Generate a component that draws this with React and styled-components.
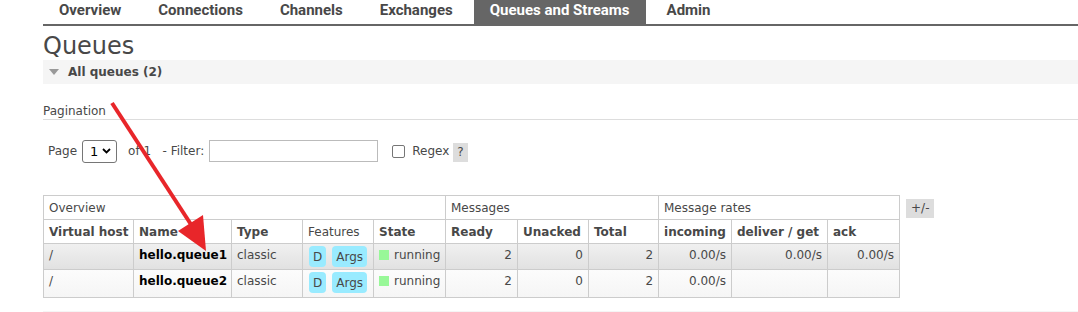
import React from "react";
import styled, { createGlobalStyle } from "styled-components";

const Global = createGlobalStyle`
  body {
    margin: 0;
    background: #fff;
    font-family: "DejaVu Sans", Verdana, sans-serif;
    font-size: 12px;
    color: #484848;
  }
`

const Page = styled.div`
  position: relative;
  width: 1078px;
  height: 312px;
  overflow: hidden;
  padding-left: 43px;
  box-sizing: border-box;
`
const Nav = styled.ul`
  display: flex;
  margin: 0;
  padding: 0;
  list-style: none;
  height: 24px;
  border-bottom: 2px solid #666;
`
const Tab = styled.li`
  padding: 0 16px;
  margin-right: ${p => p.$gap || 0}px;
  line-height: 21px;
  height: 24px;
  font-family: Roboto, "Liberation Sans", sans-serif;
  font-weight: bold;
  font-size: 15px;
  color: ${p => (p.$active ? "#fff" : "#484848")};
  background: ${p => (p.$active ? "#666" : "transparent")};
`
const Title = styled.h1`
  margin: 6px 0 0 0;
  font-size: 24px;
  font-weight: normal;
  line-height: 28px;
  height: 28px;
`
const SectionBar = styled.div`
  display: flex;
  align-items: center;
  height: 24px;
  margin-top: ${p => p.$top || 0}px;
  background: #f5f5f5;
  font-weight: bold;
  font-size: 12px;
`
const Triangle = styled.span`
  width: 0;
  height: 0;
  margin: 0 9px 0 6px;
  border-left: 5px solid transparent;
  border-right: 5px solid transparent;
  border-top: 6px solid #999;
`
const SubHead = styled.div`
  margin-top: 17px;
  height: 18px;
  line-height: 20px;
  border-bottom: 1px solid #ddd;
  font-size: 12px;
`
const Filters = styled.div`
  display: flex;
  align-items: center;
  height: 24px;
  margin-top: 19px;
  padding-left: 5px;
`
const Select = styled.div`
  display: flex;
  align-items: center;
  justify-content: space-between;
  box-sizing: border-box;
  width: 35px;
  height: 23px;
  margin: 0 11px 0 5px;
  padding: 0 5px 0 7px;
  border: 1px solid #767676;
  border-radius: 3px;
  font-size: 13px;
  color: #000;
`
const Chevron = styled.svg`
  width: 9px;
  height: 6px;
`
const TextInput = styled.div`
  box-sizing: border-box;
  width: 169px;
  height: 22px;
  margin: 0 14px 0 5px;
  border: 1px solid #bbb;
`
const Check = styled.div`
  box-sizing: border-box;
  width: 13px;
  height: 13px;
  border: 1px solid #767676;
  border-radius: 2px;
  margin-right: 7px;
`
const Help = styled.span`
  display: inline-block;
  margin-left: 4px;
  padding: 0 4px;
  height: 19px;
  line-height: 19px;
  margin-top: 2px;
  background: #ddd;
`
const TableRow = styled.div`
  display: flex;
  align-items: flex-start;
  margin-top: 32px;
`
const Table = styled.table`
  border-collapse: collapse;
  table-layout: fixed;
  width: 856px;
  border: 1px solid #ccc;
  font-size: 12px;
  td, th {
    border: 1px solid #ccc;
    padding: 0 5px;
    text-align: left;
    white-space: nowrap;
    overflow: hidden;
  }
  th {
    height: 24px;
    box-sizing: border-box;
  }
`
const ColW = styled.col`
  width: ${p => p.$w}px;
`
const Group = styled.th`
  font-weight: normal;
`
const Col = styled.th`
  font-weight: ${p => (p.$normal ? "normal" : "bold")};
`
const Row = styled.tr`
  background: ${p =>
    p.$alt
      ? "linear-gradient(#fcfcfc, #f5f5f5)"
      : "linear-gradient(#f0f0f0, #e1e1e1)"};
  td {
    height: ${p => (p.$alt ? 28 : 26)}px;
    vertical-align: top;
    padding-top: 4px;
    box-sizing: border-box;
  }
`
const Num = styled.td`
  && { text-align: right; }
`
const Name = styled.td`
  font-weight: bold;
  color: #000;
`
const Features = styled.td`
  && { padding: 2px 0 0 6px; }
`
const Pill = styled.span`
  display: inline-block;
  margin-right: 6px;
  padding: 0 4px;
  height: 21px;
  line-height: 22px;
  border-radius: 4px;
  background: #99ebff;
`
const StateBox = styled.span`
  display: inline-block;
  width: 10px;
  height: 10px;
  margin-right: 5px;
  background: #98f898;
  vertical-align: -1px;
`
const Toggle = styled.span`
  margin-left: 6px;
  margin-top: 4px;
  padding: 0 5px;
  height: 19px;
  line-height: 19px;
  background: #ddd;
`
const Arrow = styled.svg`
  position: absolute;
  left: 0;
  top: 0;
  pointer-events: none;
`

const widths = [90, 98, 71, 71, 72, 72, 71, 70, 73, 96, 72]

const rows = [
  { name: "hello.queue1", rates: ["0.00/s", "0.00/s", "0.00/s"] },
  { name: "hello.queue2", rates: ["0.00/s", "", ""] },
]

export default function App() {
  return (
    <Page>
      <Global />
      <Nav>
        <Tab $gap={5}>Overview</Tab>
        <Tab $gap={5}>Connections</Tab>
        <Tab $gap={5}>Channels</Tab>
        <Tab $gap={5}>Exchanges</Tab>
        <Tab $active $gap={5}>Queues and Streams</Tab>
        <Tab>Admin</Tab>
      </Nav>
      <Title>Queues</Title>
      <SectionBar><Triangle />All queues (2)</SectionBar>
      <SubHead>Pagination</SubHead>
      <Filters>
        Page
        <Select>
          1
          <Chevron viewBox="0 0 9 6">
            <polyline points="1,1 4.5,4.5 8,1" fill="none" stroke="#000" strokeWidth="1.8" />
          </Chevron>
        </Select>
        of 1 &nbsp;&nbsp;- Filter:
        <TextInput />
        <Check />
        Regex
        <Help>?</Help>
      </Filters>
      <TableRow>
        <Table>
          <colgroup>
            {widths.map((w, i) => <ColW key={i} $w={w} />)}
          </colgroup>
          <thead>
            <tr>
              <Group colSpan={5}>Overview</Group>
              <Group colSpan={3}>Messages</Group>
              <Group colSpan={3}>Message rates</Group>
            </tr>
            <tr>
              <Col>Virtual host</Col>
              <Col>Name</Col>
              <Col>Type</Col>
              <Col $normal>Features</Col>
              <Col>State</Col>
              <Col>Ready</Col>
              <Col>Unacked</Col>
              <Col>Total</Col>
              <Col>incoming</Col>
              <Col>deliver / get</Col>
              <Col>ack</Col>
            </tr>
          </thead>
          <tbody>
            {rows.map((r, i) => (
              <Row key={r.name} $alt={i === 1}>
                <td>/</td>
                <Name>{r.name}</Name>
                <td>classic</td>
                <Features><Pill>D</Pill><Pill>Args</Pill></Features>
                <td><StateBox />running</td>
                <Num>2</Num>
                <Num>0</Num>
                <Num>2</Num>
                {r.rates.map((v, j) => <Num key={j}>{v}</Num>)}
              </Row>
            ))}
          </tbody>
        </Table>
        <Toggle>+/-</Toggle>
      </TableRow>
      <SectionBar $top={13} />
      <Arrow width="1078" height="312">
        <line x1="112" y1="103" x2="192" y2="226" stroke="#e8262a" strokeWidth="4" />
        <polygon points="206,251 178,231 203,215" fill="#e8262a" />
      </Arrow>
    </Page>
  );
}
